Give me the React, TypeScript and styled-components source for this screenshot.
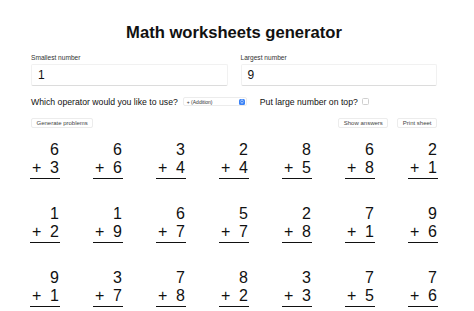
import React from "react";
import styled, { createGlobalStyle } from "styled-components";

const Global = createGlobalStyle`
  html, body { margin: 0; padding: 0; background: #fff; }
  body { font-family: "Liberation Sans", Arial, sans-serif; color: #111; }
  * { box-sizing: border-box; }
`;

const Page = styled.div`
  margin: 0 37px 0 31px;
  padding-top: 23px;
`;

const Title = styled.h1`
  margin: 0 0 10px;
  text-align: center;
  font-size: 16.6px;
  line-height: 20px;
  font-weight: 700;
  color: #111;
`;

const Fields = styled.div`
  display: grid;
  grid-template-columns: 1fr 1fr;
  gap: 13px;
`;

const Field = styled.label`
  display: flex;
  flex-direction: column;
  gap: 2px;
`;

const LabelText = styled.span`
  font-size: 6.6px;
  line-height: 9px;
  color: #333;
`;

const NumberInput = styled.div`
  height: 22px;
  padding: 0 6px;
  display: flex;
  align-items: center;
  font-size: 12px;
  color: #111;
  background: #fff;
  border: 1px solid #f1f1f1;
  border-bottom-color: #dcdcdc;
  border-radius: 2px;
`;

const OptionRow = styled.div`
  display: flex;
  align-items: center;
  margin-top: 10px;
  height: 11px;
`;

const OptionText = styled.span<{ $gap?: number }>`
  font-size: 8.7px;
  color: #111;
  margin-right: ${(p) => p.$gap ?? 0}px;
`;

const Select = styled.div`
  width: 64px;
  height: 9px;
  display: flex;
  align-items: center;
  justify-content: space-between;
  padding: 0 1px 0 3px;
  margin-right: 13px;
  border: 1px solid #ececec;
  border-radius: 2px;
  font-size: 5px;
  color: #333;
`;

const Stepper = styled.span`
  width: 6px;
  height: 6px;
  border-radius: 1.5px;
  background: #3b82f6;
  display: flex;
  align-items: center;
  justify-content: center;
`;

const Checkbox = styled.span`
  width: 7px;
  height: 7px;
  margin-left: 4px;
  border: 1px solid #cfcfcf;
  border-radius: 1.5px;
  background: #fff;
`;

const ButtonRow = styled.div`
  display: flex;
  align-items: center;
  margin-top: 11px;
  gap: 9px;
`;

const Spacer = styled.div`
  flex: 1;
`;

const Button = styled.span`
  height: 10px;
  padding: 0 4.5px;
  display: flex;
  align-items: center;
  font-size: 6px;
  color: #444;
  background: #fff;
  border: 1px solid #ececec;
  border-radius: 2px;
`;

const Grid = styled.div`
  display: flex;
  flex-direction: column;
  gap: 26px;
  margin-top: 13px;
  margin-left: -1px;
  margin-right: -1px;
`;

const ProblemRow = styled.div`
  display: flex;
  justify-content: space-between;
`;

const Problem = styled.div`
  width: 30px;
  font-size: 16px;
  line-height: 18px;
  color: #111;
  border-bottom: 1.5px solid #111;
  padding-bottom: 1px;
`;

const Top = styled.div`
  text-align: right;
  padding-right: 1px;
`;

const Bottom = styled.div`
  display: flex;
  justify-content: space-between;
  padding: 0 1px 0 2px;
`;

const rows: [number, number][][] = [
  [[6, 3], [6, 6], [3, 4], [2, 4], [8, 5], [6, 8], [2, 1]],
  [[1, 2], [1, 9], [6, 7], [5, 7], [2, 8], [7, 1], [9, 6]],
  [[9, 1], [3, 7], [7, 8], [8, 2], [3, 3], [7, 5], [7, 6]],
];

export default function App() {
  return (
    <>
      <Global />
      <Page>
        <Title>Math worksheets generator</Title>
        <Fields>
          <Field>
            <LabelText>Smallest number</LabelText>
            <NumberInput>1</NumberInput>
          </Field>
          <Field>
            <LabelText>Largest number</LabelText>
            <NumberInput>9</NumberInput>
          </Field>
        </Fields>
        <OptionRow>
          <OptionText $gap={5}>Which operator would you like to use?</OptionText>
          <Select>
            <span>+ (Addition)</span>
            <Stepper>
              <svg width="4" height="5" viewBox="0 0 4 5">
                <path d="M0.6 2 L2 0.7 L3.4 2 M0.6 3 L2 4.3 L3.4 3" fill="none" stroke="#fff" strokeWidth="0.7" />
              </svg>
            </Stepper>
          </Select>
          <OptionText>Put large number on top?</OptionText>
          <Checkbox />
        </OptionRow>
        <ButtonRow>
          <Button>Generate problems</Button>
          <Spacer />
          <Button>Show answers</Button>
          <Button>Print sheet</Button>
        </ButtonRow>
        <Grid>
          {rows.map((r, i) => (
            <ProblemRow key={i}>
              {r.map(([a, b], j) => (
                <Problem key={j}>
                  <Top>{a}</Top>
                  <Bottom>
                    <span>+</span>
                    <span>{b}</span>
                  </Bottom>
                </Problem>
              ))}
            </ProblemRow>
          ))}
        </Grid>
      </Page>
    </>
  );
}
